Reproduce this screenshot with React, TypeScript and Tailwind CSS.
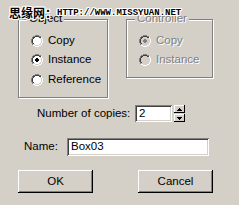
import React from "react";

const FONT = { fontFamily: '"Liberation Sans", Arial, sans-serif' };

function Radio({ checked, disabled }: { checked?: boolean; disabled?: boolean }) {
  return (
    <svg width="12" height="12" viewBox="0 0 12 12" className="shrink-0" shapeRendering="crispEdges">
      <path d="M4 0h4v1H4zM2 1h2v1H2zM8 1h2v1H8zM1 2h1v2H1zM0 4h1v4H0zM1 8h1v2H1z" fill="#808080" />
      <path d="M10 2h1v2h-1zM11 4h1v4h-1zM10 8h1v2h-1zM8 10h2v1H8zM2 10h2v1H2zM4 11h4v1H4z" fill="#ffffff" />
      <path d="M4 1h4v1H4zM2 2h2v1H2zM8 2h2v1H8zM2 3h1v1H2zM1 4h1v4H1zM2 8h1v1H2z" fill="#404040" />
      <path d="M9 3h1v1H9zM10 4h1v4h-1zM9 8h1v1H9zM8 9h2v1H8zM2 9h2v1H2zM4 10h4v1H4z" fill="#d4d0c8" />
      <path d="M4 2h4v1h1v1h1v4H9v1H8v1H4V9H3V8H2V4h1V3h1z" fill={disabled ? "#d4d0c8" : "#ffffff"} />
      {checked && <path d="M5 4h2v1h1v2H7v1H5V7H4V5h1z" fill={disabled ? "#808080" : "#000000"} />}
    </svg>
  );
}

function RadioRow({ label, checked, disabled }: { label: string; checked?: boolean; disabled?: boolean }) {
  return (
    <div className="flex h-[12px] items-center">
      <Radio checked={checked} disabled={disabled} />
      <span
        className={
          "ml-[5px] whitespace-nowrap text-[11.5px] leading-none " +
          (disabled ? "text-[#808080] [text-shadow:1px_1px_0_#ffffff]" : "text-black")
        }
      >
        {label}
      </span>
    </div>
  );
}

function Button({ label }: { label: string }) {
  return (
    <div className="flex h-[23px] w-[75px] items-center justify-center bg-[#d4d0c8] shadow-[inset_-1px_-1px_0_#000000,inset_1px_1px_0_#ffffff,inset_-2px_-2px_0_#808080,inset_2px_2px_0_#d4d0c8]">
      <span className="text-[11.5px] leading-none text-black">{label}</span>
    </div>
  );
}

function Sunken({ className, children }: { className: string; children?: React.ReactNode }) {
  return (
    <div
      className={
        "flex items-center bg-white shadow-[inset_1px_1px_0_#808080,inset_-1px_-1px_0_#ffffff,inset_2px_2px_0_#404040,inset_-2px_-2px_0_#d4d0c8] " +
        className
      }
    >
      {children}
    </div>
  );
}

export default function App() {
  return (
    <div className="relative h-[205px] w-[239px] overflow-hidden bg-[#d4d0c8]" style={FONT}>
      <div className="flex pl-[18px] pt-[19px]">
        {/* Object group */}
        <div className="relative h-[79px] w-[90px] border border-[#808080] shadow-[inset_1px_1px_0_#ffffff,1px_1px_0_#ffffff]">
          <span className="absolute left-[8px] top-[-7px] bg-[#d4d0c8] px-[2px] text-[11.5px] leading-none text-black">
            Object
          </span>
          <div className="flex flex-col pl-[12px] pt-[15px]">
            <RadioRow label="Copy" />
            <div className="mt-[7px]">
              <RadioRow label="Instance" checked />
            </div>
            <div className="mt-[8px]">
              <RadioRow label="Reference" />
            </div>
          </div>
        </div>
        {/* Controller group */}
        <div className="relative ml-[18px] h-[59px] w-[87px] border border-[#808080] shadow-[inset_1px_1px_0_#ffffff,1px_1px_0_#ffffff]">
          <span className="absolute left-[8px] top-[-7px] bg-[#d4d0c8] px-[2px] text-[11.5px] leading-none text-[#808080] [text-shadow:1px_1px_0_#ffffff]">
            Controller
          </span>
          <div className="flex flex-col pl-[12px] pt-[15px]">
            <RadioRow label="Copy" checked disabled />
            <div className="mt-[7px]">
              <RadioRow label="Instance" disabled />
            </div>
          </div>
        </div>
      </div>

      {/* Number of copies */}
      <div className="mt-[7px] flex h-[17px] items-center pl-[37px]">
        <span className="w-[90px] whitespace-nowrap text-right text-[11.5px] leading-none text-black">
          Number of copies:
        </span>
        <Sunken className="ml-[8px] h-[17px] w-[37px] pl-[4px]">
          <span className="text-[11.5px] leading-none text-black">2</span>
        </Sunken>
        <div className="ml-[2px] flex h-[17px] w-[11px] flex-col">
          <div className="flex h-[8px] items-center justify-center bg-[#d4d0c8] shadow-[inset_-1px_-1px_0_#000000,inset_1px_1px_0_#ffffff]">
            <svg width="5" height="3" viewBox="0 0 5 3" shapeRendering="crispEdges">
              <path d="M2 0h1v1h1v1h1v1H0V2h1V1h1z" fill="#000" />
            </svg>
          </div>
          <div className="mt-[1px] flex h-[8px] items-center justify-center bg-[#d4d0c8] shadow-[inset_-1px_-1px_0_#000000,inset_1px_1px_0_#ffffff]">
            <svg width="5" height="3" viewBox="0 0 5 3" shapeRendering="crispEdges">
              <path d="M0 0h5v1H4v1H3v1H2V2H1V1H0z" fill="#000" />
            </svg>
          </div>
        </div>
      </div>

      {/* Name */}
      <div className="mt-[16px] flex h-[18px] items-center pl-[24px]">
        <span className="w-[43px] text-[11.5px] leading-none text-black">Name:</span>
        <Sunken className="h-[18px] w-[142px] pl-[4px]">
          <span className="text-[11.5px] leading-none text-black">Box03</span>
        </Sunken>
      </div>

      {/* Buttons */}
      <div className="mt-[14px] flex pl-[18px]">
        <Button label="OK" />
        <div className="ml-[45px]">
          <Button label="Cancel" />
        </div>
      </div>

      {/* Watermark overlay */}
      <div className="absolute left-[9px] top-[7px] flex items-end whitespace-nowrap [text-shadow:1px_0_#fff,-1px_0_#fff,0_1px_#fff,0_-1px_#fff,1px_1px_#fff,-1px_-1px_#fff,1px_-1px_#fff,-1px_1px_#fff]">
        <span
          className="text-[12px] font-bold leading-none text-black"
          style={{ fontFamily: '"Noto Sans CJK SC", sans-serif' }}
        >
          思缘网：
        </span>
        <span
          className="mb-[1px] text-[9px] font-bold leading-none text-black"
          style={{ fontFamily: '"Liberation Mono", monospace' }}
        >
          HTTP://WWW.MISSYUAN.NET
        </span>
      </div>
    </div>
  );
}
